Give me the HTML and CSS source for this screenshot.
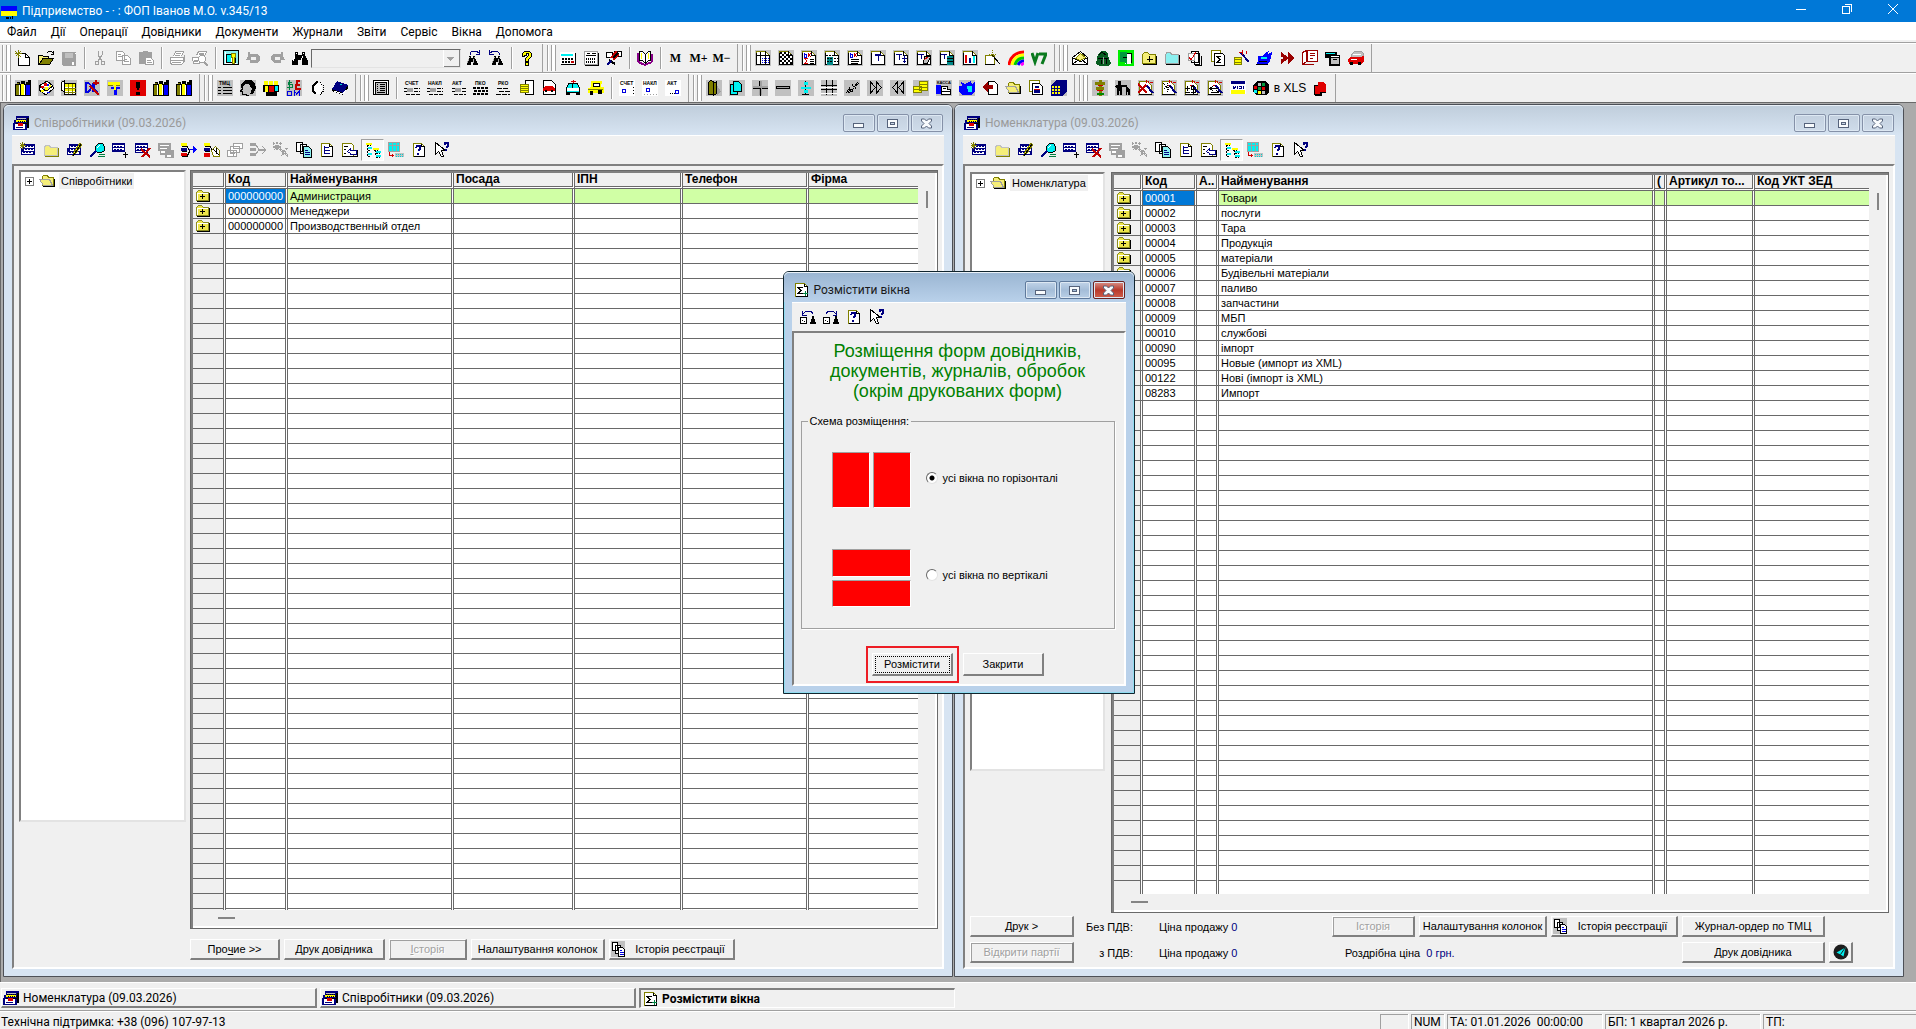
FILE: index.html
```html
<!DOCTYPE html>
<html lang="uk">
<head>
<meta charset="utf-8">
<title>Підприємство - · : ФОП Іванов М.О. v.345/13</title>
<link rel="stylesheet" href="styles.css">
</head>
<body>
<svg class="defs" aria-hidden="true">
<symbol id="win" viewBox="0 0 16 16"><path class="fn" d="M3 1h13v12h-2v2h-14v-7h1v-3h2z"/><path class="fk" d="M14 3h2v10h-2zM3 8h11v1h-11z"/><path class="fs" d="M4 3h9v1h-9z"/><path class="fy" d="M3 5h10v2h-10z"/><path class="sk" d="M4 4.500h9M5 6.500h9" stroke-dasharray="1 1"/><path class="fw" d="M2 9h10v5h-10z"/><path class="fr" d="M5 8h5v3h-5z"/><path class="sn" d="M3 12.500h7"/></symbol>
<symbol id="sum" viewBox="0 0 16 16"><path class="fw so" d="M2.500 1.500h9l3 3v10h-12z"/><path class="sk" d="M11.500 1.500v3h3v10h-12M10 5.500h-5l3 3-3 3h5"/><path class="sl" d="M12.500 9v5M10 11.500h5"/></symbol>
<symbol id="rows" viewBox="0 0 16 16"><path class="fn" d="M3 2h12v11h-14v-7h2z"/><path class="fw" d="M4 4h10v2h-10zM4 7h10v2h-10zM2 10h11v2h-11z"/><path class="sn" d="M5 4.500h9M5 7.500h9M3 10.500h9" stroke-dasharray="2 1"/></symbol>
<symbol id="w-new" viewBox="0 0 16 16"><use href="#rows"/><path class="so" d="M0 1l5 5M5 1l-5 5M2.500 0v7M0 3.500h6"/></symbol>
<symbol id="w-fold" viewBox="0 0 16 16"><path class="fy2 ss" d="M1.500 13.500v-8l1-2h4l1 2h7v8z"/><path class="so" d="M2 14.500h13.500v-9"/></symbol>
<symbol id="w-edit" viewBox="0 0 16 16"><use href="#rows"/><path class="fy so" d="M14 1l2 2-6 8-3 2 1-3z"/><path class="sk" d="M7 14l8-12"/></symbol>
<symbol id="w-find" viewBox="0 0 16 16"><path class="fc sk" d="M6.500 4.500l3-3h4l2 3v4l-3 2h-4l-2-2z"/><path class="sw" d="M8 6l3-3"/><path class="sn2" d="M7 9l-6 6"/><path class="sl" d="M9 14.500h7M10 12.500h6"/></symbol>
<symbol id="w-add" viewBox="0 0 16 16"><path class="fn" d="M0 1h13v9h-13z"/><path class="fw" d="M1 3h11v2h-11zM1 6h11v2h-11z"/><path class="sn" d="M2 4.500h9M2 7.500h9" stroke-dasharray="2 1"/><path class="sk" d="M13.500 10v6M11 12.500h5"/></symbol>
<symbol id="w-del" viewBox="0 0 16 16"><path class="fn" d="M0 1h13v10h-13z"/><path class="fw" d="M1 3h11v2h-11zM1 6h11v2h-11zM1 9h11v1h-11z"/><path class="sn" d="M2 4.500h9M2 7.500h9" stroke-dasharray="2 1"/><path class="sr2" d="M6 7l9 8M15 6l-8 9"/></symbol>
<symbol id="w-save" viewBox="0 0 16 16"><path class="fg" d="M0 1h13v7h3v8h-9v-3h-5v-4h-2z"/><path class="fw" d="M2 3h9v1h-9zM2 6h7v1h-7zM3 9h4v2h-4zM9 13h4v2h-4z"/></symbol>
<symbol id="w-hier" viewBox="0 0 16 16"><path class="sk" d="M1 4.500h5l2 3M1 9.500h5M1 14.500h5l3-6"/><path class="fy" d="M0 1h6v3h-6z"/><path class="fn" d="M0 6h6v3h-6z"/><path class="fr" d="M0 11h6v3h-6z"/><path class="sb" d="M8 7.500h6"/><path class="fb" d="M12 4l4 3.500-4 3.500z"/></symbol>
<symbol id="w-copyh" viewBox="0 0 16 16"><path class="sk" d="M1 4.500h5l2 3M1 9.500h5"/><path class="fy" d="M0 1h6v3h-6zM10 6h3v8h-3z"/><path class="fn" d="M0 6h6v3h-6z"/><path class="fr" d="M0 11h6v4h-6z"/><path class="fw so" d="M7.500 8.500l4-4 4 4v6h-6z"/><path class="sk" d="M9 7l6 6M12 6v6"/></symbol>
<symbol id="w-g1" viewBox="0 0 16 16"><path class="sg fw" d="M6.500 1.500h9v5h-9zM3.500 4.500h9v6h-9zM.5 8.500h9v6h-9z"/><path class="sg" d="M3 11.500h5M6 9v5"/></symbol>
<symbol id="w-g2" viewBox="0 0 16 16"><path class="fg" d="M0 1h6v3h-6zM0 6h6v3h-6zM0 11h6v3h-6zM8 7h8v2h-8z"/><path class="sg" d="M5 2l4 5M5 13l4-5M12 4l4 4-4 4"/></symbol>
<symbol id="w-g3" viewBox="0 0 16 16"><path class="sg" d="M0 1l9 8M8 1l-7 7M4 0v9M0 5h9M7 7l8 7M14 6l-5 8M10 8v6" stroke-width="2" stroke-dasharray="2 1"/></symbol>
<symbol id="w-docs" viewBox="0 0 16 16"><path class="fw sk" d="M.5.5h6v9h-6zM4.500 2.500h6v9h-6z"/><path class="fc2 sk" d="M7.500 4.500h5l3 3v8h-8z"/><path class="sn" d="M9 8.500h3M9 10.500h5M9 12.500h5"/></symbol>
<symbol id="w-doc" viewBox="0 0 16 16"><path class="fw so" d="M2.500 1.500h8l3 3v10h-11z"/><path class="sk" d="M10.500 1.500v3h3v10h-11"/><path class="sn" d="M5.500 4v8M6 5.500h4M6 8.500h5M6 11.500h5"/></symbol>
<symbol id="w-doc2" viewBox="0 0 16 16"><path class="fw so" d="M.5 1.500h9l2 2v11h-11z"/><path class="sk" d="M2 4.500h4M2 7.500h2M2 11.500h2"/><path class="fw sn" d="M5.500 9.500l3-3v2h6v4h-6v-1z"/><path class="sk" d="M0 14.500h15.500v-7"/></symbol>
<symbol id="w-tree" viewBox="0 0 16 16"><path class="fy" d="M1 1h6v2h-6zM8 6h6v2h-6z"/><path class="sk" d="M2.500 3v11M2 3.500h4M3 8.500h3M3 14.500h3M10.500 8v6M9 8.500h4M11 11.500h4M11 15.500h4" stroke-dasharray="2 1"/><path class="fc" d="M3 5h4v2h-4zM3 11h4v2h-4zM11 9h5v2h-5zM11 13h5v2h-5z"/></symbol>
<symbol id="w-mon" viewBox="0 0 16 16"><path class="fc sg" d="M.5.5h11v9h-11z"/><path class="sg" d="M1 3.500h10M4.500 1v8M8.500 1v8"/><path class="sr" d="M1.500 10v3.500h4M4 12v3"/><path class="fs" d="M7 11h9v4h-9z"/><path class="sc" d="M8 12.500h7M8 14.500h7" stroke-dasharray="1 1"/></symbol>
<symbol id="w-help" viewBox="0 0 16 16"><path class="fw so" d="M2.500 1.500h8l3 3v10h-11z"/><path class="sk" d="M10.500 1.500v3h3v10h-11"/><path class="sn2" d="M5 6l1-2h3v3l-2 2M7 11v2"/></symbol>
<symbol id="w-what" viewBox="0 0 16 16"><path class="fw sk" d="M1.500.5v12l3-3 3 5h2l-2-6h4z"/><path class="sn2" d="M11 3V1h3v3l-2 2M12 7v2"/></symbol>
<symbol id="folder" viewBox="0 0 16 14"><path fill="#eee64a" stroke="#8c8c20" d="M1.500 11.500v-8l2-2h3l2 2h5v8z"/><path class="sk" d="M2 12.500h12.500v-9"/><path class="sw" d="M2.500 11v-7h10"/><path class="sk" d="M7.500 5v5M5 7.500h5"/></symbol>
<symbol id="fopen" viewBox="0 0 16 16"><path class="fy2 so" d="M3.500 12.500v-9l1-1h4l1 2h5v8z"/><path class="fy2 sg" d="M.5 6.500h10l3 6h-9z"/><path class="sk" d="M4 13.500h11.500v-8"/></symbol>
<symbol id="foplus" viewBox="0 0 16 16"><path class="fy2 so" d="M1.500 13.500v-9l2-2h3l2 2h6v9z"/><path class="sk" d="M2 14.500h13.500v-9M8.500 6v6M6 9.500h6"/></symbol>
<symbol id="reg" viewBox="0 0 16 16"><path class="fs" d="M0 0h14v16h-14z"/><path class="fw sk" d="M1.500 1.500h5v8h-5zM4.500 4.500h5v8h-5z"/><path class="fw sk" d="M7.500 6.500h4l2 2v7h-6z"/><path class="sb" d="M9 9.500h2M9 11.500h4M9 13.500h4"/></symbol>
<symbol id="bars" viewBox="0 0 16 16"><path class="fk" d="M0 4h2V2h3v2h1V1h4v3h1V2h2V0h3v16H0z"/><path class="fo" d="M1 5h3v10h-3zM2 3h2v1h-2z"/><path class="fy" d="M6 4h3v11h-3z"/><path class="fb" d="M11 5h4v10h-4z"/><path class="sw" d="M4.500 5v10M9.500 5v10"/></symbol>
<symbol id="bino" viewBox="0 0 16 16"><path class="fk" d="M3 2h3v3h4v-3h3v3l3 6v4h-6v-5h-4v5h-6v-4l3-6z"/><path class="sw" d="M3 6l-2 5M4 3v1M10.500 6l-1 5M11 3v1"/></symbol>
<symbol id="page" viewBox="0 0 16 16"><path class="fs" d="M0 0h16v16h-16z"/><path class="fw so" d="M1.500 1.500h9l4 4v9h-13z"/><path class="sk" d="M10.500 1v4.500h4v9.500M1 14.500h14M1.500 3v12"/></symbol>
<symbol id="wand" viewBox="0 0 16 16"><path class="fs" d="M0 0h16v16h-16z"/><path class="fw so" d="M1.500 1.500h8l4 4v9h-12z"/><path class="sn2" d="M8 5l7 8"/><path class="sr" d="M8.500 0v3M12 2.500h3M6 5.500h2M10.500 1v2"/><path class="sk" d="M1 14.500h13"/></symbol>
<symbol id="paper" viewBox="0 0 16 16"><path class="sk" d="M0 8.500h16M0 11.500h16M2 14.500h14" stroke-dasharray="4 1"/><path class="fg" d="M3 8h6v4h-6z"/></symbol>
<symbol id="b-min" viewBox="0 0 16 16"><path fill="#f8fbfd" stroke="#56637b" d="M2.500 8.500h10v4h-10z"/></symbol>
<symbol id="b-max" viewBox="0 0 16 16"><path fill="#f8fbfd" fill-rule="evenodd" stroke="#56637b" d="M2.500 4.500h10v8h-10zM5.500 7.500h4v2h-4z"/></symbol>
<symbol id="b-x" viewBox="0 0 16 16"><path fill="#f8fbfd" stroke="#56637b" shape-rendering="auto" d="M2.500 4h3l2 2 2-2h3v2l-2.500 2.500 2.500 2.500v2h-3l-2-2-2 2h-3v-2l2.500-2.500L2.500 6z"/></symbol>
</svg>
<div class="app">
<header class="titlebar">
<svg class="i" viewBox="0 0 16 16"><path fill="#00f" d="M0 3h16v5H0z"/><path class="fy" d="M0 8h16v5H0z"/><path class="fk" d="M5 14h3v2h-3zM9 14h1v2h-1zM11 13h1v3h-1z"/></svg>
<h1>Підприємство - · : ФОП Іванов М.О. v.345/13</h1>
<button aria-label="Згорнути"><svg class="i" viewBox="0 0 16 16"><path class="sw" d="M3 9.500h10"/></svg></button>
<button aria-label="Відновити"><svg class="i" viewBox="0 0 16 16"><path class="sw" d="M3.500 6.500h7v7h-7zM5.500 4.500h7v7"/></svg></button>
<button aria-label="Закрити"><svg class="i smooth" viewBox="0 0 16 16"><path class="sw" d="M3 4l10 10M13 4L3 14"/></svg></button>
</header>
<nav class="menu"><a href="#">Файл</a><a href="#">Дії</a><a href="#">Операції</a><a href="#">Довідники</a><a href="#">Документи</a><a href="#">Журнали</a><a href="#">Звіти</a><a href="#">Сервіс</a><a href="#">Вікна</a><a href="#">Допомога</a></nav>
<div class="bar">
<div class="group">
<button><svg class="i" viewBox="0 0 16 16"><path class="fw sk" d="M3.500 3.500h7l4 4v8h-11z"/><path class="sk" d="M10.500 3v4.500h4"/><path class="so" d="M0 1l6 6M6 1L1 6M3.500 0v8M0 3.500h7"/></svg></button>
<button><svg class="i" viewBox="0 0 16 16"><path class="fy2 sk" d="M.5 14.500v-9h4l1 1h5v3"/><path class="fo sk" d="M1 14.500l4-6h10.500l-4 6z"/><path class="sk" d="M9 3l2-2h2l2 2M15.500 1v3h-3"/></svg></button>
<button><svg class="i" viewBox="0 0 16 16"><path class="fg" d="M1 2h14v14h-13l-1-1z"/><path class="fs" d="M4 3h8v5h-8z"/><path class="fw" d="M11 12h2v3h-2zM14 3h1v1h-1z"/></svg></button>
<i class="sep"></i>
<button><svg class="i" viewBox="0 0 16 16"><path class="sg" d="M6 1v4l4 6M10 1v4l-4 6M3.500 11.500h3v3h-3zM9.500 11.500h3v3h-3z"/></svg></button>
<button><svg class="i" viewBox="0 0 16 16"><path class="fw sg" d="M1.500 1.500h6l2 2v7h-8zM7.500 5.500h5l3 3v6h-8z"/><path class="sg" d="M3 4.500h3M3 6.500h4M9 9.500h3M9 11.500h5"/></svg></button>
<button><svg class="i" viewBox="0 0 16 16"><path class="fg" d="M1 2h4v-1h5v1h4v12h-13z"/><path class="fw sg" d="M7.500 7.500h5l3 3v4h-8z"/><path class="sg" d="M9 10.500h4M9 12.500h5"/></svg></button>
<i class="sep"></i>
<button><svg class="i" viewBox="0 0 16 16"><path class="fw sg" d="M4.500 6.500l2-5h8l-2 5M1.500 7.500h13v5l-2 2h-10l-1-2z"/><path class="sg" d="M7 3.500h5M6 5.500h5M2 10.500h12M3 12.500h9M15.500 5v7"/></svg></button>
<button><svg class="i" viewBox="0 0 16 16"><path class="fw sg" d="M4.500 5.500l2-4h8l-2 5M.5 7.500h7v6h-6z"/><circle class="fw sg" cx="10" cy="9" r="3.500"/><path class="sg" d="M12 12l4 4M7 3.500h5M2 10.500h4" stroke-width="2"/></svg></button>
<i class="sep"></i>
<button><svg class="i" viewBox="0 0 16 16"><path class="fc2 sk" d="M.5.5h15v14h-15z"/><path class="sw" d="M2 1.500v12h12"/><path class="fw sk" d="M3.500 4.500h9v8h-9z"/><path class="fc" d="M4 5h4v7h-4z"/><path class="fy so" d="M8.500 3.500h4v4h-1v6h-2v-6h-1z"/></svg></button>
<button><svg class="i" viewBox="0 0 16 16"><path class="fg" d="M2 2h2v2h8l2 3v3l-3 3h-7v-3h6v-3h-5v3h-5l2-4z"/></svg></button>
<button><svg class="i" viewBox="0 0 16 16"><path class="fg" d="M14 2h-2v2h-8l-2 3v3l3 3h7v-3h-6v-3h5v3h5l-2-4z"/></svg></button>
<button><svg class="i"><use href="#bino"/></svg></button>
<select class="combo" aria-label="Пошук" disabled><option></option></select>
<button><svg class="i" viewBox="0 0 16 16"><use href="#bino" x="1" y="5" width="12" height="11"/><path class="sn" d="M5 5V3l2-2h4l3 2M14.500 0v4h-4"/></svg></button>
<button><svg class="i" viewBox="0 0 16 16"><use href="#bino" x="3" y="5" width="12" height="11"/><path class="sn" d="M11 5V3L9 1H5L2 3M1.500 0v4h4"/></svg></button>
<i class="sep"></i>
<button><svg class="i" viewBox="0 0 16 16"><path class="fy sk" d="M3.500 6.500v-3l2-2h5l2 2v3l-3 3v2h-3v-3l3-3v-2h-2v2zM6.500 12.500h3v3h-3z"/></svg></button>
</div>
<div class="group">
<button><svg class="i" viewBox="0 0 16 16"><path class="fw" d="M0 2h15v12h-15z"/><path class="fc" d="M1 4h12v2h-12z"/><path class="sk" d="M15.500 3v12M1 14.500h15"/><path class="sk2" d="M2 9h12M2 12h12" stroke-dasharray="2 1"/><path class="sr2" d="M11 12h3"/></svg></button>
<button><svg class="i" viewBox="0 0 16 16"><path class="fw sg" d="M1.500 1.500h13v13h-13z"/><path class="sk" d="M15.500 3v12M2 15.500h14M4 3.500h3M9 3.500h4M3 5.500h10"/><path class="sk2" d="M3 9h10M3 12h10" stroke-dasharray="1 1"/></svg></button>
<button><svg class="i" viewBox="0 0 16 16"><path class="fw sk" d="M.5 2.500h6v5h-6zM8.500 1.500h7v5h-7z"/><path class="sr2" d="M5 8l5-6 2 3-5 5"/><path class="sk2" d="M7 8l5-5M3 10l6 4"/><path class="sn2" d="M1 15l4-4"/></svg></button>
<i class="sep"></i>
<button><svg class="i" viewBox="0 0 16 16"><path fill="#808" d="M0 3h2v8l6 3 7-3v2l-7 3-6-2-2-2zM14 4h2v8h-2z"/><path class="fw sk" d="M2.500 1.500h3l3 3v9l-3-3h-3zM8.500 4.500l3-3h2v9h-2l-3 3z"/><path class="sy" d="M4.500 3v6M11.500 3v6"/></svg></button>
<i class="sep"></i>
<button class="mem">M</button><button class="mem">M+</button><button class="mem">M−</button>
</div>
<div class="group">
<button><svg class="i" viewBox="0 0 16 16"><use href="#page"/><path class="sk" d="M2 5.500h12M5.500 2v12M10.500 5v9"/><path class="sb" d="M7 8.500h7M7 10.500h7M7 12.500h7" stroke-dasharray="1 1"/></svg></button>
<button><svg class="i" viewBox="0 0 16 16"><use href="#page"/><path class="sk2" d="M2 3h9M4 5h11M2 7h12M4 9h11M2 11h12M4 13h10" stroke-dasharray="2 2"/></svg></button>
<button><svg class="i" viewBox="0 0 16 16"><use href="#page"/><path class="sb" d="M3.500 3v4h2v-3h-2"/><path class="sr" d="M7.500 3v4M10 3L8 5l2 2M3 8.500h4M3 13.500h4M4 9l2 2-2 2"/><path class="sk" d="M9 9.500h4M9 11.500h4M9 13.500h4"/></svg></button>
<button><svg class="i" viewBox="0 0 16 16"><use href="#page"/><path fill="#088" d="M3 7h6v8h-6z"/><path class="sk" d="M2 5.500h13M3 8.500h6M3 11.500h6M10 8.500h4M10 11.500h4" stroke-dasharray="2 1"/></svg></button>
<button><svg class="i" viewBox="0 0 16 16"><use href="#page"/><path class="sb" d="M3.500 3v4h2v-3h-2"/><path class="sr" d="M7.500 3v4M10 3L8 5l2 2"/><path class="sk" d="M4 9.500h8M4 11.500h8M4 13.500h7"/></svg></button>
<button><svg class="i" viewBox="0 0 16 16"><use href="#page"/><path class="sn" d="M5 4.500h6M5 5.500h6M8 5v6"/></svg></button>
<button><svg class="i" viewBox="0 0 16 16"><use href="#page"/><path class="sn" d="M3 4.500h6M6 5v5M11.500 5v8M9 8.500h5M10 11.500h3"/></svg></button>
<button><svg class="i" viewBox="0 0 16 16"><use href="#page"/><path class="sn" d="M2 4.500h6M5 5v4"/><path class="fs sk" d="M8.500 6.500h6l-3 7h-4z"/><path class="sr" d="M8 10l4-3"/></svg></button>
<button><svg class="i" viewBox="0 0 16 16"><use href="#page"/><path class="sn" d="M2 4.500h6M5 5v4"/><path fill="#088" d="M8 6h6v9h-6z"/><path class="sk" d="M8 8.500h6M8 11.500h6"/></svg></button>
<button><svg class="i" viewBox="0 0 16 16"><use href="#page"/><path class="fr" d="M3 5h2v8h-2z"/><path class="fn" d="M7 8h2v5h-2z"/><path class="fc" d="M11 6h2v7h-2z"/></svg></button>
<button><svg class="i" viewBox="0 0 16 16"><path class="fw so" d="M.5 5.500h9v9h-9z"/><path class="sk" d="M0 14.500h10M7 5l8 9"/><path class="so" d="M4 4h7M7.500 0v8" stroke-dasharray="1 1"/></svg></button>
<button><svg class="i smooth" viewBox="0 0 16 16"><g stroke-width="3"><path stroke="red" d="M1 15C2 7 8 2 16 2"/><path stroke="#ff0" d="M4 15c1-6 6-10 12-10"/><path stroke="#0c0" d="M7 15c1-4 4-7 9-7"/><path stroke="#00f" d="M10 15c1-2 3-4 6-4"/><path stroke="#f0f" d="M13 15l3-2"/></g></svg></button>
<button><svg class="i" viewBox="0 0 16 16"><path stroke="#0a7a1e" stroke-width="3" shape-rendering="auto" d="M1 3l3 9 3-9M8 4h7l-4 10"/></svg></button>
</div>
<div class="group">
<button><svg class="i" viewBox="0 0 16 16"><path class="fw sk" d="M.5 7.500l8-6 7 6v7h-15z"/><path class="fy2 so" d="M3.500 8.500l5-5 5 4-5 3z"/><path class="sk" d="M1 8l6 3h3l5-3M1 14l5-4M15 14l-5-4"/></svg></button>
<button><svg class="i" viewBox="0 0 16 16"><path fill="#085d20" d="M3 4l3-3h4l3 3 1 5 2 4-3 3h-8l-4-2 1-6z"/><path class="sk" d="M4 5l3-3 4 3M3 8h10M6 10v4M11 9v5"/><path class="sg" d="M8 7v7"/></svg></button>
<button><svg class="i" viewBox="0 0 16 16"><path fill="#0e0" d="M0 0h16v16h-16z"/><path class="fw" d="M7 3h6v11h-6z"/><path class="fl" d="M2 2h7v12l-3-2h-4z"/><path class="sk" d="M5 7h4M9 3h4v10"/></svg></button>
<button><svg class="i"><use href="#foplus"/></svg></button>
<button><svg class="i" viewBox="0 0 16 16"><path class="fc2 sg" d="M1.500 13.500v-8l1-3h4l1 2h7v9z"/><path class="sk" d="M2 14.500h13.500v-10"/></svg></button>
<button><svg class="i" viewBox="0 0 16 16"><path class="fw sk" d="M7.500 3.500h5v11h-5zM4.500 1.500h7v11h-7z"/><path class="fw sg" d="M1.500 3.500h6v7h-6z"/><path class="sr" d="M2 7l2 3 5-8"/><path class="sk" d="M8 15.500h6v-10"/></svg></button>
<button><svg class="i" viewBox="0 0 16 16"><path class="fw so" d="M1.500.5h9v11h-9z"/><path class="fw sk" d="M4.500 3.500h8l2 2v10h-10z"/><path class="sk" d="M11 6.500h-4l3 3-3 3h4"/></svg></button>
<button><svg class="i" viewBox="0 0 16 16"><path class="fy so" d="M1.500 7.500h7v7h-7z"/><path class="so" d="M1 9.500h8M1 12.500h8"/><path class="sn2" d="M8 3l8 9"/><path class="sr" d="M9.500 0v5M6 2.500h4M13 1v3"/></svg></button>
<button><svg class="i" viewBox="0 0 16 16"><path class="fb" d="M2 6h4l4-4 3-1-1 3 4-2-1 6-2 5-3 2h-9l1-5z"/><path class="fc" d="M5 7h6v2h-6z"/><path class="sk" d="M0 14.500h12M3 11.500h8"/></svg></button>
<button><svg class="i" viewBox="0 0 16 16"><path fill="#900" d="M2 2l7 5V2l7 6-7 6V9l-7 5V9l3-1-3-1z"/></svg></button>
<button><svg class="i" viewBox="0 0 16 16"><path class="fw" stroke="#900" d="M5.500.5h10v11h-10zM.5 2.500l4-2v11l-4 3z"/><path stroke="#900" d="M8 3.500h5M8 5.500h5M8 8.500h3M1 14.500h11"/></svg></button>
<button><svg class="i" viewBox="0 0 16 16"><path class="fk" d="M0 2h12v3h3v11h-11v-8h-4z"/><path class="fc" d="M1 3h9v1h-9z"/><path class="fs" d="M6 8h8v6h-8z"/><path class="fw" d="M6 6h8v1h-8z"/><path class="sk" d="M8 9.500h4"/></svg></button>
<button><svg class="i" viewBox="0 0 16 16"><path class="fs sg" d="M3.500 7.500v-3l3-3h7l2 2v6z"/><path class="fr" d="M0 9l2-2h9l5-1v6l-3 2h-12z"/><path class="fk" d="M2 12h3v3h-3zM10 12h3v3h-3z"/><path class="sw" d="M3 9.500h6M5 4.500h8"/></svg></button>
</div>
</div>
<div class="bar">
<div class="group">
<button><svg class="i on"><use href="#bars"/></svg></button>
<button><svg class="i on" viewBox="0 0 16 16"><path class="fw sk" d="M1 6l8-5 6 5-7 5zM1 7v3l7 5 7-6V7"/><path class="fr" d="M6 3h3v3h-3zM3 6h3v2h-3z"/><path class="fy" d="M7 7h3v3h-3zM11 5h2v2h-2zM3 10h3v2h-3z"/><path class="fb" d="M9 4h2v2h-2zM9 12h3v1h-3z"/></svg></button>
<button><svg class="i on" viewBox="0 0 16 16"><path class="fw sk" d="M.5 2.500l3-2v11l-3-1zM3.500 3.500h11v11h-11z"/><path class="fy" d="M4 4h10v3h-10zM4 9h10v2h-10z"/><path class="so" d="M4 8.500h11M4 12.500h11M7.500 4v10M11.500 4v10"/></svg></button>
<button><svg class="i on" viewBox="0 0 16 16"><path class="sb" d="M1.500 3v9h3l2-3v-4l-2-2zM8.500 3v9M12 3L9 7l4 5" stroke-width="2"/><path class="sr2" d="M6 6l9 9M12 0v5M9 3h6"/></svg></button>
<button><svg class="i on" viewBox="0 0 16 16"><path class="fb" d="M4 7h9v2h-3v6h-3v-6h-3z"/><path class="fy" d="M1 2h12v3h-4v5h-2v-5h-6z"/><path class="so" d="M1 5.500h5M9 5.500h4"/></svg></button>
<button><svg class="i" viewBox="0 0 16 16"><path class="fr" d="M0 0h16v16h-16z"/><path class="fk" d="M6 2h4v4l-1 4h-2l-1-4zM6 12h4v3h-4z"/></svg></button>
<button><svg class="i"><use href="#bars"/></svg></button>
<button><svg class="i"><use href="#bars"/></svg></button>
</div>
<div class="group">
<button><svg class="i on" viewBox="0 0 16 16"><text x="2" y="5">ТМЦ</text><path class="sk" d="M1 7.500h3M1 10.500h3M1 13.500h3M6 7.500h9M6 10.500h9M6 13.500h9"/></svg></button>
<button><svg class="i on" viewBox="0 0 16 16"><path class="fk" d="M1 4l4-4h6l4 3 1 5-3 6h-3l2-5-3-5H5L3 7l-2 1z"/><path class="sk" d="M2.500 6v3l-2 2h2v3l4 1 2 1"/></svg></button>
<button><svg class="i" viewBox="0 0 16 16"><path class="fk" d="M0 5h16v7h-2v4h-11v-4h-3z"/><path class="fy" d="M1 1h4v4h-4zM6 1h4v4h-4zM11 1h4v4h-4zM2 6h3v6h-3z"/><path class="fr" d="M6 6h5v6h-5z"/><path class="fc" d="M12 6h3v5h-3z"/></svg></button>
<button><svg class="i on" viewBox="0 0 16 16"><path class="sl" d="M6 2.500h-4v2h4v3h-5M3.500 0v10"/><path class="sr2" d="M14 1h-3l-1 8h5M9 5h5"/><path class="sb" d="M1.500 11.500v4h4v-4zM8.500 16v-5l2 3 3-3v5"/></svg></button>
<button><svg class="i" viewBox="0 0 16 16"><path class="fw" d="M5 3h8v11h-8z"/><path class="sk2" d="M7 3l-3 3v5l3 3M6 3l3-1"/><path class="sk" d="M11 2.500l3 3v6l-3 3" stroke-dasharray="1 1"/></svg></button>
<button><svg class="i" viewBox="0 0 16 16"><path class="fn" d="M5 1l11 4-5 8-11-4z"/><path class="fk" d="M0 9l11 4 5-8v3l-5 7-11-4z"/><path class="sw" d="M2 11l9 3 3-4"/><path class="sc" d="M8 4h2"/></svg></button>
</div>
<div class="group">
<button><svg class="i" viewBox="0 0 16 16"><path class="fw sk" d="M.5.5h15v14h-15z"/><path class="fs sk" d="M2.500 2.500h11v12h-11z"/><path class="sk" d="M4 4.500h1M7 4.500h5M4 6.500h1M7 6.500h5M4 8.500h1M7 8.500h5M4 10.500h1M7 10.500h5M4 12.500h8"/></svg></button>
<i class="sep"></i>
<button><svg class="i" viewBox="0 0 16 16"><text x="1" y="5">СЧЕТ</text><use href="#paper"/></svg></button>
<button><svg class="i" viewBox="0 0 16 16"><text x="1" y="5">НАКЛ</text><use href="#paper"/></svg></button>
<button><svg class="i" viewBox="0 0 16 16"><text x="2" y="5">АКТ</text><use href="#paper" x="2"/></svg></button>
<button><svg class="i" viewBox="0 0 16 16"><text x="2" y="5">ПКО</text><path class="sk2" d="M0 8h16M1 11h14M0 14h16" stroke-dasharray="3 1"/></svg></button>
<button><svg class="i" viewBox="0 0 16 16"><text x="2" y="5">РКО</text><path class="sk" d="M1 8.500h12M3 11.500h12M0 14.500h14" stroke-dasharray="5 1"/></svg></button>
<button><svg class="i" viewBox="0 0 16 16"><path class="fw sk" d="M6.500.5h8v14h-8z"/><path class="fy so" d="M1.500 4.500h8v8h-8z"/><path class="so" d="M1 6.500h9M1 8.500h9M1 10.500h9"/></svg></button>
<button><svg class="i" viewBox="0 0 16 16"><path class="fw sk" d="M1.500.5h8l4 4v10h-12z"/><path class="fr" d="M1 8l3-2h6l2 2h1v3h-12z"/><path class="sk2" d="M3 11h2M9 11h2"/></svg></button>
<button><svg class="i" viewBox="0 0 16 16"><path class="fc sk" d="M3.500 3.500h9l2 5v4h-13v-4z"/><path class="fw" d="M2 8h12v3h-12z"/><path class="fk" d="M1 12h4v3h-4zM11 12h4v3h-4zM7 4h1v4h-1z"/><path class="sr" d="M6 1.500h5M8.500 0v3"/></svg></button>
<button><svg class="i" viewBox="0 0 16 16"><path class="fy" d="M3 1h11l-1 6h3v6h-16v-5l3-1z"/><path class="fw sk" d="M5.500 3.500h6v3h-6z"/><path class="fk" d="M2 11h3v4h-3zM10 10h4v4h-4z"/><path class="so" d="M0 9.500h15"/></svg></button>
<i class="sep"></i>
<button><svg class="i off" viewBox="0 0 16 16"><text x="1" y="5">СЧЕТ</text><circle class="sb" cx="5" cy="11" r="2"/><path class="sk" d="M14.500 7v8" stroke-dasharray="1 2"/></svg></button>
<button><svg class="i off" viewBox="0 0 16 16"><text x="1" y="5">НАКЛ</text><circle class="sb" cx="6" cy="10" r="2"/><path class="sg" d="M2 14.500h13" stroke-dasharray="1 2"/></svg></button>
<button><svg class="i off" viewBox="0 0 16 16"><text x="2" y="5">АКТ</text><circle class="sb" cx="12" cy="12" r="2"/><path class="sk" d="M5 13.500h5" stroke-dasharray="1 1"/></svg></button>
</div>
<div class="group">
<button><svg class="i on" viewBox="0 0 16 16"><path class="fo sk" d="M2.500 2.500l2-2 3 1v13h-5zM7.500 3.500l3-2v12l-3 2z"/><path class="fg" d="M11 5l4 7-4 3z"/></svg></button>
<button><svg class="i on" viewBox="0 0 16 16"><path class="fc sk" d="M1.500 4.500h7v10h-7z"/><path class="fc sk" d="M4.500 1.500h5l3 3v7h-8z"/></svg></button>
<button><svg class="i on" viewBox="0 0 16 16"><path class="fg" d="M1 6h6v-5h3v5h6v3h-6v6h-3v-6h-6z"/><path class="sk" d="M1 8.500h7v7M9.500 8.500h6M7.500 1v5"/></svg></button>
<button><svg class="i on" viewBox="0 0 16 16"><path class="fg sk" d="M1.500 6.500h13v2h-13z"/></svg></button>
<button><svg class="i on" viewBox="0 0 16 16"><path class="sk" d="M7.500 1v14M4 14.500h7M3 8.500h10"/><path class="fc" d="M6 2h4v3h-4zM3 7h10v2h-10zM6 10h4v3h-4z"/></svg></button>
<button><svg class="i on" viewBox="0 0 16 16"><path class="sk" d="M0 5.500h16M0 9.500h16M5.500 0v15M11.500 0v15"/><path class="sw" d="M0 7.500h16M0 13.500h16"/></svg></button>
<button><svg class="i on" viewBox="0 0 16 16"><path class="sk2" d="M2 13l4-4M5 13l8-9M11 6l3-3M8 5l4 3M5 8l4 3" stroke-dasharray="1 1"/></svg></button>
<button><svg class="i on" viewBox="0 0 16 16"><path class="sk" d="M3.500 2v11l5-5.500zM9.500 2v11l5-5.500z"/></svg></button>
<button><svg class="i on" viewBox="0 0 16 16"><path class="sk" d="M7.500 2v11l-5-5.500zM13.500 2v11l-5-5.500z"/></svg></button>
<button><svg class="i on" viewBox="0 0 16 16"><path class="fy so" d="M6.500 1.500h8v9h-8zM.5 6.500h8v6h-8z"/><path class="so" d="M6 4.500h9M6 7.500h9M0 9.500h9"/></svg></button>
<button><svg class="i on" viewBox="0 0 16 16"><text class="tiny" x="1" y="4">КАССА</text><path class="fb" d="M0 5h5v9h-5z"/><path class="fw sk" d="M5.500 6.500h6v3h3v5h-9z"/><path class="sk" d="M6 11.500h8M7 8.500h3"/></svg></button>
<button><svg class="i on" viewBox="0 0 16 16"><path class="fb" d="M2 2l4 2 6-3 1 3 3-2v10l-4 3h-9l-3-4V6h3z"/><path class="fc" d="M8 6h5v6h-4z"/></svg></button>
<button><svg class="i" viewBox="0 0 16 16"><path class="fw sk" d="M6.500 1.500h6l3 3v10h-9z"/><path fill="#900" d="M0 7l6-5v3h5v4h-5v3z"/></svg></button>
<button><svg class="i"><use href="#fopen"/></svg></button>
<button><svg class="i" viewBox="0 0 16 16"><path class="fw so" d="M1.500.5h10v11h-10z"/><path class="fw sk" d="M4.500 3.500h7l3 3v8h-10z"/><path class="fn" d="M7 6h4v2h-4zM6 10h6v3h-6z"/><path class="sr" d="M6 9.500h6"/></svg></button>
<button><svg class="i on" viewBox="0 0 16 16"><path class="fn" d="M5 0h11v11l-5 5h-11v-11z"/><path class="fy" d="M1 6h2v2h-2zM4 6h2v2h-2zM7 6h2v2h-2zM1 9h2v2h-2zM4 9h2v2h-2zM7 9h2v2h-2zM1 12h2v2h-2zM4 12h2v2h-2zM7 12h2v2h-2z"/></svg></button>
</div>
<div class="group">
<button><svg class="i on" viewBox="0 0 16 16"><path class="fo" d="M7 0h3v16h-3z"/><path class="so" stroke-width="3" d="M3 3h10M4 8h8"/><path fill="#080" d="M5 13h7v2h-7z"/><path class="sr" d="M6 5.500h5M5 10.500h6"/></svg></button>
<button><svg class="i on" viewBox="0 0 16 16"><path class="fk" d="M3 1h3v4h6v2h-5v8h-2v-4h-1v4h-2v-7l-2-1 1-2h2zM11 7h2l2 3v5h-2v-3h-1v3h-1z"/></svg></button>
<button><svg class="i" viewBox="0 0 16 16"><use href="#wand"/><path class="sr2" d="M0 4l9 9M8 5l-8 8"/></svg></button>
<button><svg class="i" viewBox="0 0 16 16"><use href="#wand"/><path class="sk" d="M2 3l8 9M3 9l7-3M6 3v10" stroke-dasharray="1 1"/></svg></button>
<button><svg class="i" viewBox="0 0 16 16"><use href="#wand"/><path class="sk" d="M1 8.500h5M3.500 6v5M1 12.500h5M11 6.500h-4v3h4v3h-4M9 5v9"/></svg></button>
<button><svg class="i" viewBox="0 0 16 16"><use href="#wand"/><path class="sk" d="M3 8.500h8M6 6L3 8.500 6 11M4 12.500h8M9 10l3 2.500"/></svg></button>
<button><svg class="i" viewBox="0 0 16 16"><path class="fw" d="M0 1h16v13h-16z"/><path class="fn" d="M1 1h14v3h-14z"/><path class="fy" d="M1 10h14v4h-14z"/><path class="sn" d="M3 6l1 3 2-3M7.500 6v3M9 6.500h2v2h-2M13.500 6v3"/></svg></button>
<button><svg class="i" viewBox="0 0 16 16"><path class="fk" d="M4 1h8l4 3v8l-3 3h-9l-4-3v-7z"/><path class="fs" d="M5 3h3v3h-3zM9 11h3v3h-3z"/><path class="fr" d="M1 6h3v3h-3zM9 7h3v3h-3z"/><path class="fl" d="M5 7h3v3h-3zM9 3h3v3h-3z"/><path class="fc" d="M1 10h3v3h-3z"/><path class="fy" d="M5 11h3v3h-3z"/></svg></button>
<button class="xls">в XLS</button>
<button><svg class="i" viewBox="0 0 16 16"><path class="fr sk" d="M2.500 5.500h6v9h-6z"/><path class="fr" d="M6 2h5l3 3v7h-8z"/><path class="sk" d="M3 15.500h6v-3h5"/></svg></button>
</div>
</div>
<main class="mdi">
<section class="window">
<header class="caption"><svg class="i"><use href="#win"/></svg><h2>Співробітники (09.03.2026)</h2><button aria-label="Згорнути"><svg class="i"><use href="#b-min"/></svg></button><button aria-label="Розгорнути"><svg class="i"><use href="#b-max"/></svg></button><button aria-label="Закрити"><svg class="i"><use href="#b-x"/></svg></button></header>
<div class="client">
<div class="tools"><button><svg class="i"><use href="#w-new"/></svg></button><button><svg class="i"><use href="#w-fold"/></svg></button><button><svg class="i"><use href="#w-edit"/></svg></button><button><svg class="i"><use href="#w-find"/></svg></button><button><svg class="i"><use href="#w-add"/></svg></button><button><svg class="i"><use href="#w-del"/></svg></button><button><svg class="i"><use href="#w-save"/></svg></button><button><svg class="i"><use href="#w-hier"/></svg></button><button><svg class="i"><use href="#w-copyh"/></svg></button><button><svg class="i"><use href="#w-g1"/></svg></button><button><svg class="i"><use href="#w-g2"/></svg></button><button><svg class="i"><use href="#w-g3"/></svg></button><button><svg class="i"><use href="#w-docs"/></svg></button><button><svg class="i"><use href="#w-doc"/></svg></button><button><svg class="i"><use href="#w-doc2"/></svg></button><button class="down"><svg class="i"><use href="#w-tree"/></svg></button><button><svg class="i"><use href="#w-mon"/></svg></button><button><svg class="i"><use href="#w-help"/></svg></button><button><svg class="i"><use href="#w-what"/></svg></button></div>
<div class="panel staff">
<div class="split">
<div class="tree"><i class="plus"></i><svg class="i"><use href="#fopen"/></svg><span>Співробітники</span></div>
<div class="grid">
<div class="view"><table>
<colgroup><col class="w33"><col class="w62"><col class="w166"><col class="w121"><col class="w108"><col class="w126"><col></colgroup>
<thead><tr><th></th><th>Код</th><th>Найменування</th><th>Посада</th><th>ІПН</th><th>Телефон</th><th>Фірма</th></tr></thead>
<tbody>
<tr class="cur"><td><svg class="f"><use href="#folder"/></svg></td><td>000000000</td><td>Администрация</td><td></td><td></td><td></td><td></td></tr>
<tr><td><svg class="f"><use href="#folder"/></svg></td><td>000000000</td><td>Менеджери</td><td></td><td></td><td></td><td></td></tr>
<tr><td><svg class="f"><use href="#folder"/></svg></td><td>000000000</td><td>Производственный отдел</td><td></td><td></td><td></td><td></td></tr>
<tr class="rest"><td></td><td></td><td></td><td></td><td></td><td></td><td></td></tr>
</tbody></table></div>
<i class="vthumb"></i><i class="hthumb"></i>
</div>
</div>
<div class="actions"><button class="btn w90">Про<u>ч</u>ие &gt;&gt;</button><button class="btn w101">Друк довідника</button><button class="btn w78" disabled><u>І</u>сторія</button><button class="btn w134">Налаштування колонок</button><button class="btn w126 reg"><svg class="i"><use href="#reg"/></svg><span>Історія реєстрації</span></button></div>
</div>
</div>
</section>
<section class="window">
<header class="caption"><svg class="i"><use href="#win"/></svg><h2>Номенклатура (09.03.2026)</h2><button aria-label="Згорнути"><svg class="i"><use href="#b-min"/></svg></button><button aria-label="Розгорнути"><svg class="i"><use href="#b-max"/></svg></button><button aria-label="Закрити"><svg class="i"><use href="#b-x"/></svg></button></header>
<div class="client">
<div class="tools"><button><svg class="i"><use href="#w-new"/></svg></button><button><svg class="i"><use href="#w-fold"/></svg></button><button><svg class="i"><use href="#w-edit"/></svg></button><button><svg class="i"><use href="#w-find"/></svg></button><button><svg class="i"><use href="#w-add"/></svg></button><button><svg class="i"><use href="#w-del"/></svg></button><button><svg class="i"><use href="#w-save"/></svg></button><button><svg class="i"><use href="#w-g3"/></svg></button><button><svg class="i"><use href="#w-docs"/></svg></button><button><svg class="i"><use href="#w-doc"/></svg></button><button><svg class="i"><use href="#w-doc2"/></svg></button><button class="down"><svg class="i"><use href="#w-tree"/></svg></button><button><svg class="i"><use href="#w-mon"/></svg></button><button><svg class="i"><use href="#w-help"/></svg></button><button><svg class="i"><use href="#w-what"/></svg></button></div>
<div class="panel goods">
<div class="split">
<div class="tree"><i class="plus"></i><svg class="i"><use href="#fopen"/></svg><span>Номенклатура</span></div>
<div class="grid">
<div class="view"><table>
<colgroup><col class="w29"><col class="w54"><col class="w22"><col><col class="w12"><col class="w88"><col class="w114"></colgroup>
<thead><tr><th></th><th>Код</th><th>А..</th><th>Найменування</th><th>(</th><th>Артикул то...</th><th>Код УКТ ЗЕД</th></tr></thead>
<tbody>
<tr class="cur"><td><svg class="f"><use href="#folder"/></svg></td><td>00001</td><td></td><td>Товари</td><td></td><td></td><td></td></tr>
<tr><td><svg class="f"><use href="#folder"/></svg></td><td>00002</td><td></td><td>послуги</td><td></td><td></td><td></td></tr>
<tr><td><svg class="f"><use href="#folder"/></svg></td><td>00003</td><td></td><td>Тара</td><td></td><td></td><td></td></tr>
<tr><td><svg class="f"><use href="#folder"/></svg></td><td>00004</td><td></td><td>Продукція</td><td></td><td></td><td></td></tr>
<tr><td><svg class="f"><use href="#folder"/></svg></td><td>00005</td><td></td><td>матеріали</td><td></td><td></td><td></td></tr>
<tr><td><svg class="f"><use href="#folder"/></svg></td><td>00006</td><td></td><td>Будівельні матеріали</td><td></td><td></td><td></td></tr>
<tr><td><svg class="f"><use href="#folder"/></svg></td><td>00007</td><td></td><td>паливо</td><td></td><td></td><td></td></tr>
<tr><td><svg class="f"><use href="#folder"/></svg></td><td>00008</td><td></td><td>запчастини</td><td></td><td></td><td></td></tr>
<tr><td><svg class="f"><use href="#folder"/></svg></td><td>00009</td><td></td><td>МБП</td><td></td><td></td><td></td></tr>
<tr><td><svg class="f"><use href="#folder"/></svg></td><td>00010</td><td></td><td>службові</td><td></td><td></td><td></td></tr>
<tr><td><svg class="f"><use href="#folder"/></svg></td><td>00090</td><td></td><td>імпорт</td><td></td><td></td><td></td></tr>
<tr><td><svg class="f"><use href="#folder"/></svg></td><td>00095</td><td></td><td>Новые (импорт из XML)</td><td></td><td></td><td></td></tr>
<tr><td><svg class="f"><use href="#folder"/></svg></td><td>00122</td><td></td><td>Нові (імпорт із XML)</td><td></td><td></td><td></td></tr>
<tr><td><svg class="f"><use href="#folder"/></svg></td><td>08283</td><td></td><td>Импорт</td><td></td><td></td><td></td></tr>
<tr class="rest"><td></td><td></td><td></td><td></td><td></td><td></td><td></td></tr>
</tbody></table></div>
<i class="vthumb"></i><i class="hthumb"></i>
</div>
</div>
<div class="prices">
<button class="btn">Друк &gt;</button><span class="tax">Без ПДВ:</span><span class="price">Ціна продажу <b>0</b></span><button class="btn" disabled>Історія</button><button class="btn">Налаштування колонок</button><button class="btn reg"><svg class="i"><use href="#reg"/></svg><span>Історія реєстрації</span></button><button class="btn">Журнал-ордер по ТМЦ</button><i></i>
<button class="btn" disabled>Відкрити партії</button><span class="tax">з ПДВ:</span><span class="price">Ціна продажу <b>0</b></span><span class="retail">Роздрібна ціна&nbsp; <b>0 грн.</b></span><i></i><button class="btn">Друк довідника</button><button class="btn" aria-label="Telegram"><svg class="i smooth" viewBox="0 0 16 16"><circle cx="8" cy="8" r="7.500" fill="#1c1c1c"/><path class="fc" d="M12.500 3.500l-2 9-3-2-4-2z"/><path d="M12 4l-4.500 6.500" stroke="#1c1c1c"/></svg></button>
</div>
</div>
</div>
</section>
<section class="window dialog" role="dialog" aria-label="Розмістити вікна">
<header class="caption"><svg class="i"><use href="#sum"/></svg><h2>Розмістити вікна</h2><button aria-label="Згорнути"><svg class="i"><use href="#b-min"/></svg></button><button aria-label="Розгорнути"><svg class="i"><use href="#b-max"/></svg></button><button class="close" aria-label="Закрити вікно"><svg class="i"><use href="#b-x"/></svg></button></header>
<div class="client">
<div class="tools"><button><svg class="i" viewBox="0 0 16 16"><path class="fw sk" d="M.5 8.500h6v6h-6z"/><path class="sk" d="M2 11.500h1M4 12.500h1"/><path class="fk" d="M12 7h2v3h1v3h1v2h-6v-2h1v-3h1z"/><path class="sn" d="M2.500 2v4.500h4M3 5l3-3h5l2 3"/></svg></button><button><svg class="i" viewBox="0 0 16 16"><path class="fw sk" d="M.5 8.500h6v6h-6z"/><path class="sk" d="M2 11.500h1M4 12.500h1"/><path class="fk" d="M12 7h2v3h1v3h1v2h-6v-2h1v-3h1z"/><path class="sn" d="M13.500 2v4.500h-4M13 5l-3-3h-5l-2 3"/></svg></button><button><svg class="i"><use href="#w-help"/></svg></button><button><svg class="i"><use href="#w-what"/></svg></button></div>
<form class="panel">
<p class="lead">Розміщення форм довідників,<br>документів, журналів, обробок<br>(окрім друкованих форм)</p>
<fieldset><legend>Схема розміщення:</legend>
<div class="opt"><span class="pic cols"><i></i><i></i></span><label><input type="radio" name="layout" checked>усі вікна по горізонталі</label></div>
<div class="opt"><span class="pic lines"><i></i><i></i></span><label><input type="radio" name="layout">усі вікна по вертікалі</label></div>
</fieldset>
<div class="confirm"><span class="mark"><button type="button" class="btn focus">Розмістити</button></span><button type="button" class="btn">Закрити</button></div>
</form>
</div>
</section>
</main>
<nav class="tasks"><button><svg class="i"><use href="#win"/></svg>Номенклатура (09.03.2026)</button><button><svg class="i"><use href="#win"/></svg>Співробітники (09.03.2026)</button><button class="active"><svg class="i"><use href="#sum"/></svg>Розмістити вікна</button></nav>
<footer class="status"><span class="msg">Технічна підтримка: +38 (096) 107-97-13</span><span class="c28"></span><span class="c33">NUM</span><span class="c155">ТА: 01.01.2026&nbsp; 00:00:00</span><span class="c155">БП: 1 квартал 2026 р.</span><span class="c153">ТП:</span></footer>
</div>
</body>
</html>
```
FILE: styles.css
```css
* { box-sizing: border-box; }
body { margin: 0; font: 11px/14px "Liberation Sans", Arial, sans-serif; color: #000; }
button { font: inherit; color: inherit; padding: 0; margin: 0; border: 0; background: none; }
h1, h2, p { margin: 0; font-weight: normal; }
.app { display: flex; flex-direction: column; height: 100vh; overflow: hidden; background: #f0f0f0; }
.defs { display: none; }

/* icons */
.i { width: 16px; height: 16px; flex: none; display: block; }
.i, .f { fill: none; shape-rendering: crispEdges; }
.smooth { shape-rendering: auto; }
.on { background: #c0c0c0; }
.off { background: #fff; }
.i text { font: bold 5px "Liberation Sans", Arial, sans-serif; fill: #000; }
.i .tiny { font-size: 4px; }
.fk { fill: #000; } .fw { fill: #fff; } .fy { fill: #ff0; } .fy2 { fill: #f5ee78; } .fn { fill: #000080; }
.fg { fill: #a0a0a0; } .fr { fill: #e00000; } .fc { fill: #00f0f0; } .fc2 { fill: #8cf0f0; } .fb { fill: #0000ff; }
.fo { fill: #808000; } .fl { fill: #009a3c; } .fs { fill: #c0c0c0; }
.sk { stroke: #000; } .sk2 { stroke: #000; stroke-width: 2; } .sn { stroke: #000080; } .sn2 { stroke: #000080; stroke-width: 2; }
.sg { stroke: #a0a0a0; } .so { stroke: #808000; } .sr { stroke: #d00000; } .sr2 { stroke: #c00000; stroke-width: 2; }
.sw { stroke: #fff; } .sy { stroke: #ff0; } .sb { stroke: #0000e0; } .sl { stroke: #008040; } .sc { stroke: #00d0d0; } .ss { stroke: #c0c0c0; }

/* application frame */
.titlebar { display: flex; align-items: center; height: 22px; flex: none; background: #0078d7; color: #fff; padding-left: 1px; }
.titlebar h1 { flex: 1; padding-left: 5px; font: 12px/22px Roboto, sans-serif; }
.titlebar button { width: 46px; height: 22px; display: flex; justify-content: center; }
.menu { display: flex; height: 20px; flex: none; background: #fff; border-bottom: 2px solid #f0f0f0; font: 12px/20px Roboto, sans-serif; }
.menu a { padding: 0 7px; color: #000; text-decoration: none; }
.bar { display: flex; height: 30px; flex: none; border-top: 1px solid #a0a0a0; box-shadow: inset 0 1px #fff; padding-top: 1px; }
.group { display: flex; align-items: center; padding: 0 4px; border-right: 1px solid #a0a0a0; }
.group:first-child { padding-left: 2px; }
.group::before { content: ""; width: 7px; height: 26px; border: solid #a0a0a0; border-width: 0 1px; background: linear-gradient(90deg, #fff 1px, #f0f0f0 1px 3px, #a0a0a0 3px 4px, #fff 4px); }
.group button { width: 23px; height: 24px; display: flex; align-items: center; justify-content: center; }
.group .mem { font: bold 12px "Liberation Serif", serif; }
.group .xls { width: 36px; font-size: 12px; }
.sep { width: 8px; height: 22px; background: linear-gradient(90deg, transparent 4px, #a0a0a0 4px 5px, #fff 5px 6px, transparent 6px); }
.combo { width: 150px; height: 19px; border: 1px solid; border-color: #696969 #e3e3e3 #e3e3e3 #696969; border-radius: 0; appearance: none; opacity: 1; background: linear-gradient(#a0a0a0, #a0a0a0) right 6px top 7px / 7px 1px no-repeat, linear-gradient(#a0a0a0, #a0a0a0) right 7px top 8px / 5px 1px no-repeat, linear-gradient(#a0a0a0, #a0a0a0) right 8px top 9px / 3px 1px no-repeat, linear-gradient(#a0a0a0, #a0a0a0) right 9px top 10px / 1px 1px no-repeat, linear-gradient(#fff, #fff) right 16px top 0 / 1px 100% no-repeat, linear-gradient(#808080, #808080) right 0 bottom 0 / 17px 1px no-repeat, linear-gradient(#808080, #808080) right 0 top 0 / 1px 100% no-repeat, #f0f0f0; }
.mdi { position: relative; flex: 1; min-height: 0; display: flex; gap: 1px; padding: 1px 12px 5px 2px; border: solid #696969; border-width: 1px 0 0 1px; background: #ababab; }

/* child windows */
.window { flex: 1; min-width: 0; display: flex; flex-direction: column; padding: 0 8px 7px; border: 1px solid #4d5057; border-radius: 6px 6px 0 0; background: #d7e4f2; }
.caption { display: flex; align-items: center; gap: 2px; height: 30px; flex: none; margin: 0 -8px; padding: 6px 9px 0; border-radius: 5px 5px 0 0; background: linear-gradient(#bfcddb, #d7e4f2); box-shadow: inset 0 1px #eaf1f8; color: #9a9a9a; }
.caption h2 { flex: 1; padding-left: 3px; font: 12px/22px Roboto, sans-serif; }
.caption button { width: 32px; height: 18px; border: 1px solid #8591a8; border-radius: 2px; display: flex; align-items: center; justify-content: center; background: linear-gradient(#c3d0df, #cfdcea); box-shadow: inset 0 0 0 1px #dde8f3; }
.client { flex: 1; min-height: 0; display: flex; flex-direction: column; background: #f0f0f0; border-top: 1px solid #fff; }
.tools { display: flex; align-items: center; height: 28px; flex: none; padding-left: 4px; }
.tools button { width: 23px; height: 22px; display: flex; align-items: center; justify-content: center; }
.tools .down { border: 1px solid; border-color: #a0a0a0 #fff #fff #a0a0a0; background: #f8f8f8; }
.panel { flex: 1; min-height: 0; display: flex; flex-direction: column; border: 2px solid; border-color: #808080 #fff #fff #808080; padding: 4px 4px 7px 5px; }
.goods { padding: 6px 4px 4px 5px; }
.split { flex: 1; min-height: 0; display: flex; gap: 4px; }
.goods .split { gap: 6px; }
.tree { width: 167px; margin-bottom: 107px; flex: none; display: flex; align-items: flex-start; padding: 1px 4px; border: 2px solid; border-color: #808080 #e3e3e3 #e3e3e3 #808080; background: #fff; }
.goods .tree { width: 135px; margin-bottom: 142px; }
.tree span { background: #f0f0f0; padding: 1px 2px; margin-left: 4px; }
.plus { width: 9px; height: 9px; margin: 4px 5px 0 0; border: 1px solid #808080; background: linear-gradient(#000, #000) center / 5px 1px no-repeat, linear-gradient(#000, #000) center / 1px 5px no-repeat; }
.grid { flex: 1; min-width: 0; position: relative; border: 1px solid #696969; padding: 2px 19px 18px 2px; box-shadow: inset 2px 2px #808080, inset -2px -2px #fff; }
.view { height: 100%; overflow: hidden; background: #fff; }
table { width: 100%; height: 100%; table-layout: fixed; border-spacing: 0; }
th, td { padding: 0 2px; text-align: left; white-space: nowrap; overflow: hidden; border-right: 3px double #696969; background-clip: padding-box; }
th:last-child, td:last-child { border-right: 0; }
th { height: 16px; font: bold 12px/13px "Liberation Sans", Arial, sans-serif; background-color: #f0f0f0; border-bottom: 3px double #696969; }
td { height: 15px; line-height: 14px; border-bottom: 1px solid #696969; }
td:first-child { background-color: #f0f0f0; }
.cur td { background-color: #d0ffa5; }
.cur td:nth-child(2) { background-color: #0078d7; color: #fff; }
.goods .cur td:nth-child(3) { background-color: #fff; }
.cur td:first-child { background-color: #f0f0f0; }
.rest td { height: auto; border-bottom: 0; background-image: repeating-linear-gradient(transparent 0 14px, #696969 14px 15px); }
.f { display: block; width: 16px; height: 14px; }
.vthumb, .hthumb { position: absolute; background: #858585; }
.vthumb { width: 2px; height: 17px; top: 20px; right: 9px; }
.hthumb { width: 17px; height: 2px; left: 27px; bottom: 9px; }
.goods .hthumb { left: 19px; }
.w12 { width: 12px; } .w22 { width: 22px; } .w29 { width: 29px; } .w33 { width: 33px; } .w54 { width: 54px; } .w62 { width: 62px; }
.w78 { width: 78px; } .w88 { width: 88px; } .w90 { width: 90px; } .w101 { width: 101px; } .w108 { width: 108px; } .w114 { width: 114px; }
.w121 { width: 121px; } .w126 { width: 126px; } .w134 { width: 134px; } .w166 { width: 166px; }

.btn { height: 21px; display: flex; align-items: center; justify-content: center; white-space: nowrap; border: solid; border-width: 1px 2px 2px 1px; border-color: #fff #808080 #808080 #fff; background: #f0f0f0; }
.btn:disabled { color: #a0a0a0; text-shadow: 1px 1px #fff; box-shadow: inset 1px 1px #a0a0a0; }
.reg { justify-content: flex-start; padding-left: 1px; }
.reg span { flex: 1; text-align: center; }
.actions { display: flex; gap: 4px; padding: 10px 0 0 171px; }
.prices { display: grid; grid-template-columns: 104px 55px 1fr 83px 128px 127px 143px 24px; gap: 5px 4px; align-items: center; padding: 3px 36px 0 0; }
.prices b { font-weight: normal; color: #000080; }
.tax { text-align: right; }
.price { padding-left: 22px; }
.retail { grid-column: span 2; padding-left: 13px; }

/* dialog */
.dialog { position: absolute; left: calc(50% - 176px); top: 168px; width: 352px; height: 423px; border-color: #10242e; background: #b9d1ea; box-shadow: inset 0 0 0 1px #8fdcf0; }
.dialog .caption { color: #1a1a1a; background: linear-gradient(#9ab5d2, #b9d1ea); }
.dialog .caption button { border-color: #5f7a9c; background: linear-gradient(#c0d3e8, #a4bdd8 50%, #b9cfe6); }
.dialog .caption .close { border-color: #6b2220; background: linear-gradient(#d9938a, #b8392b 50%, #cf5f4c); }
.dialog .panel { padding: 8px 9px 8px 7px; }
.dialog .tools { padding-left: 5px; }
.lead { font-size: 18px; line-height: 20px; text-align: center; color: #008000; white-space: nowrap; }
fieldset { min-width: 0; margin: 13px 0 0; padding: 24px 0 21px 30px; border: 1px solid #a0a0a0; box-shadow: 1px 1px #fff; }
legend { margin-left: -24px; padding: 0 2px; }
.opt { display: flex; align-items: flex-start; gap: 15px; }
.opt + .opt { margin-top: 41px; }
.pic { display: flex; gap: 3px; width: 79px; height: 56px; }
.lines { flex-direction: column; height: 58px; }
.pic i { flex: 1; background: #f00; border: 1px solid; border-color: #a0a0a0 #fff #fff #a0a0a0; }
.opt label { display: flex; align-items: center; gap: 5px; height: 52px; }
input[type="radio"] { appearance: none; width: 12px; height: 12px; margin: 0; border: 1px solid; border-color: #696969 #e3e3e3 #e3e3e3 #696969; border-radius: 50%; background: #fff; }
input[type="radio"]:checked { background: radial-gradient(circle, #000 2px, #fff 3px); }
.confirm { display: flex; align-items: center; justify-content: center; gap: 4px; margin-top: 17px; padding-right: 5px; }
.confirm .btn { width: 81px; height: 23px; }
.mark { border: 2px solid #ed1c24; padding: 5px 4px; }
.focus { outline: 1px dotted #000; outline-offset: -4px; }

/* window list and status line */
.tasks { display: flex; gap: 3px; height: 28px; flex: none; padding: 5px 1px 2px; border-top: 1px solid #fff; font: 12px/18px Roboto, sans-serif; }
.tasks button { flex: 1; max-width: 316px; display: flex; align-items: center; gap: 4px; padding-left: 1px; border: solid; border-width: 1px 2px 2px 1px; border-color: #fff #808080 #808080 #fff; }
.tasks .active { font-weight: bold; border-width: 2px 1px 1px 2px; border-color: #808080 #fff #fff #808080; }
.status { display: flex; gap: 3px; height: 19px; flex: none; padding-top: 3px; border-top: 1px solid #a0a0a0; box-shadow: inset 0 1px #fff; font: 12px/14px Roboto, sans-serif; white-space: nowrap; }
.status span { border: solid #a0a0a0; border-width: 1px 0 0 1px; padding-left: 2px; box-shadow: 1px 0 #fff; }
.status .msg { flex: 1; border-color: transparent; padding-left: 0; box-shadow: none; }
.status .c28 { width: 28px; } .status .c33 { width: 33px; } .status .c155 { width: 155px; } .status .c153 { width: 153px; }
```
